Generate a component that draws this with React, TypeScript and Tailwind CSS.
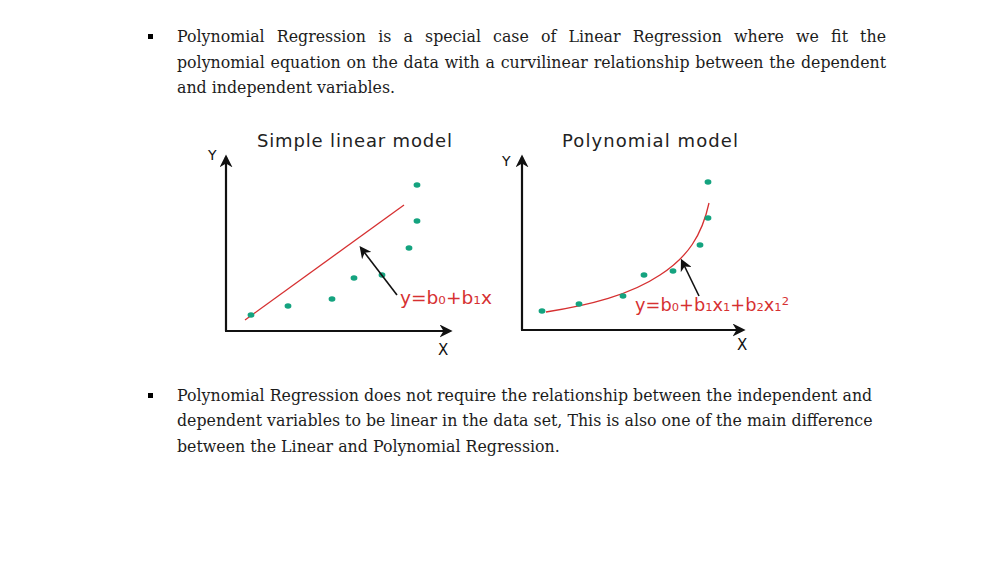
const serif = { fontFamily: '"DejaVu Serif", "Liberation Serif", serif' };

const linearDots = [
  [251, 312],
  [288, 303],
  [332, 296],
  [354, 275],
  [382, 272],
  [409, 245],
  [417, 218],
  [417, 182],
];

const polyDots = [
  [542, 308],
  [579, 301],
  [623, 293],
  [644, 272],
  [673, 268],
  [700, 242],
  [708, 215],
  [708, 179],
];

function Charts() {
  const dot = "#14a37f";
  const red = "#d63031";
  return (
    <svg
      width={620}
      height={240}
      viewBox="190 120 620 240"
      className="block"
      style={{ fontFamily: '"DejaVu Sans", "Liberation Sans", sans-serif' }}
    >
      <defs>
        <marker
          id="big"
          viewBox="0 0 10 10"
          refX="8"
          refY="5"
          markerWidth="13"
          markerHeight="13"
          markerUnits="userSpaceOnUse"
          orient="auto"
        >
          <path d="M0 0 L10 5 L0 10 L3 5 Z" fill="#111" />
        </marker>
        <marker
          id="small"
          viewBox="0 0 10 10"
          refX="8"
          refY="5"
          markerWidth="12"
          markerHeight="12"
          markerUnits="userSpaceOnUse"
          orient="auto"
        >
          <path d="M0 0 L10 5 L0 10 L3 5 Z" fill="#111" />
        </marker>
      </defs>

      {/* simple linear model */}
      <text x={257} y={144} fontSize={18} textLength={195} fill="#222">
        Simple linear model
      </text>
      <text x={208} y={157} fontSize={14} fill="#111">Y</text>
      <text x={438} y={352} fontSize={15} fill="#111">X</text>
      <line x1={226} y1={328} x2={226} y2={154} stroke="#111" strokeWidth={2.2} markerEnd="url(#big)" />
      <line x1={225} y1={328} x2={450} y2={328} stroke="#111" strokeWidth={2.2} markerEnd="url(#big)" />
      <line x1={245} y1={317} x2={404} y2={202} stroke={red} strokeWidth={1.3} />
      {linearDots.map(([x, y]) => (
        <ellipse key={`l${x}${y}`} cx={x} cy={y} rx={3.4} ry={2.7} fill={dot} />
      ))}
      <line x1={397} y1={292} x2={361} y2={245} stroke="#111" strokeWidth={1.6} markerEnd="url(#small)" />
      <text x={400} y={301} fontSize={17} fill={red} textLength={92} lengthAdjust="spacingAndGlyphs">
        y=b<tspan fontSize={11}>0</tspan>+b<tspan fontSize={11}>1</tspan>x
      </text>

      {/* polynomial model */}
      <text x={562} y={144} fontSize={18} textLength={176} fill="#222">
        Polynomial model
      </text>
      <text x={502} y={163} fontSize={14} fill="#111">Y</text>
      <text x={737} y={347} fontSize={15} fill="#111">X</text>
      <line x1={522} y1={327} x2={522} y2={154} stroke="#111" strokeWidth={2.2} markerEnd="url(#big)" />
      <line x1={521} y1={327} x2={743} y2={327} stroke="#111" strokeWidth={2.2} markerEnd="url(#big)" />
      <path
        d="M546 309 C590 302 630 292 660 272 C688 254 702 232 709 200"
        fill="none"
        stroke={red}
        strokeWidth={1.3}
      />
      {polyDots.map(([x, y]) => (
        <ellipse key={`p${x}${y}`} cx={x} cy={y} rx={3.4} ry={2.7} fill={dot} />
      ))}
      <line x1={699} y1={293} x2={682} y2={258} stroke="#111" strokeWidth={1.6} markerEnd="url(#small)" />
      <text x={635} y={308} fontSize={17} fill={red} textLength={154} lengthAdjust="spacingAndGlyphs">
        y=b<tspan fontSize={11}>0</tspan>+b<tspan fontSize={11}>1</tspan>x<tspan fontSize={11}>1</tspan>+b<tspan fontSize={11}>2</tspan>x<tspan fontSize={11}>1</tspan><tspan fontSize={11} dy={-6}>2</tspan>
      </text>
    </svg>
  );
}

function Bullet({ lines, justify }: { lines: string[]; justify?: boolean }) {
  return (
    <div className="flex">
      <div className="w-[29px] shrink-0 pt-[10px]">
        <div className="h-[5px] w-[5px] bg-black" />
      </div>
      <p className="w-[709px] text-[15.8px] leading-[25.5px] text-[#1c1c1c]" style={serif}>
        {lines.map((line, i) => (
          <span
            key={i}
            className={`block whitespace-nowrap ${
              justify && i < lines.length - 1 ? "text-justify [text-align-last:justify]" : ""
            }`}
          >
            {line}
          </span>
        ))}
      </p>
    </div>
  );
}

export default function App() {
  return (
    <div className="h-[565px] w-[1005px] bg-white pl-[148px] pt-[24px]">
      <Bullet
        justify
        lines={[
          "Polynomial Regression is a special case of Linear Regression where we fit the",
          "polynomial equation on the data with a curvilinear relationship between the dependent",
          "and independent variables.",
        ]}
      />
      <div className="ml-[42px] mt-[22px]">
        <Charts />
      </div>
      <div className="mt-[20px]">
        <Bullet
          lines={[
            "Polynomial Regression does not require the relationship between the independent and",
            "dependent variables to be linear in the data set, This is also one of the main difference",
            "between the Linear and Polynomial Regression.",
          ]}
        />
      </div>
    </div>
  );
}
